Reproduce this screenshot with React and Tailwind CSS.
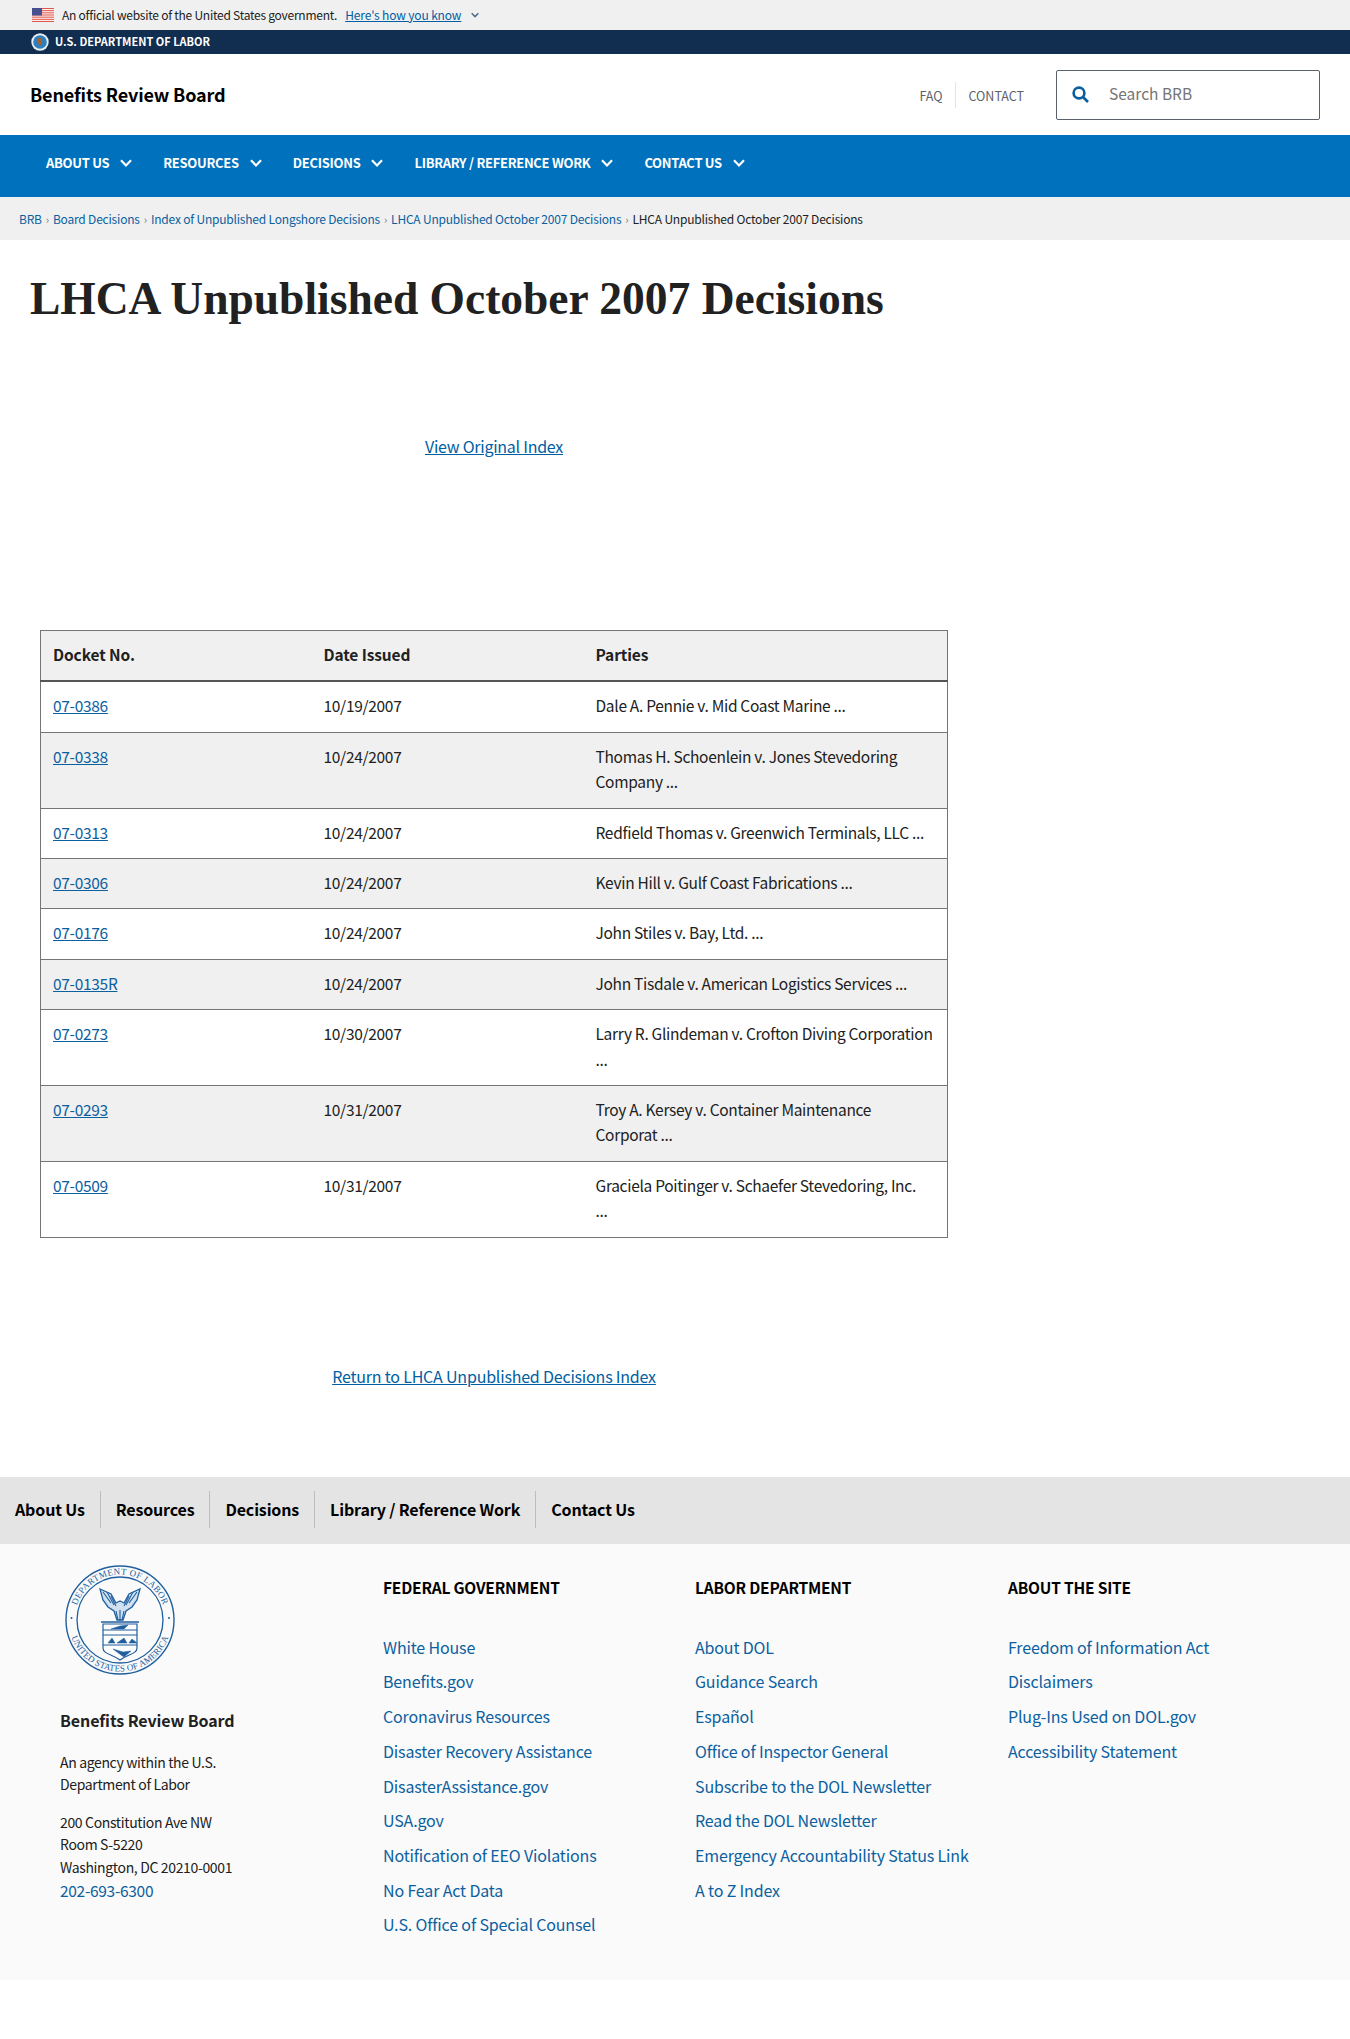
const sans = "font-['Noto_Sans_CJK_SC','Source_Sans_Pro',sans-serif]";
function Chevron({ className }) {
  return (
    <svg viewBox="0 0 12 8" className={className} fill="none" stroke="currentColor" strokeWidth="2.2">
      <path d="M1 1.2 6 6.4l5-5.2" />
    </svg>
  );
}
function Flag() {
  return (
    <svg viewBox="0 0 22 14" className="w-[22px] h-[14px]">
      <rect width="22" height="14" fill="#fff" />
      {[0, 2.15, 4.3, 6.45, 8.6, 10.75, 12.9].map((y) => <rect key={y} y={y} width="22" height="1.1" fill="#e2574c" />)}
      <rect width="10" height="7.5" fill="#46508f" />
    </svg>
  );
}
function SmallSeal() {
  return (
    <svg viewBox="0 0 18 18" className="w-[18px] h-[18px]">
      <circle cx="9" cy="9" r="8.7" fill="#e8eef4" />
      <circle cx="9" cy="9" r="6.8" fill="#2d7fbf" />
      <path d="M7 5h4v5l-2 3-2-3z" fill="#a5622a" />
    </svg>
  );
}
function Seal() {
  const blue = "#205f9e";
  return (
    <svg viewBox="0 0 110 110" className="w-[110px] h-[110px]" fill="none" stroke={blue}>
      <circle cx="55" cy="55" r="54" strokeWidth="1.4" />
      <circle cx="55" cy="55" r="43" strokeWidth="1.3" />
      <path id="sealtop" d="M9.5 55a45.5 45.5 0 0 1 91 0" stroke="none" />
      <path id="sealbot" d="M3.5 55a51.5 51.5 0 0 0 103 0" stroke="none" />
      <text fontFamily="Liberation Serif, serif" fontSize="9" fill={blue} stroke="none" letterSpacing="0.4" textAnchor="middle"><textPath href="#sealtop" startOffset="50%">DEPARTMENT OF LABOR</textPath></text>
      <text fontFamily="Liberation Serif, serif" fontSize="9" fill={blue} stroke="none" letterSpacing="0.1" textAnchor="middle"><textPath href="#sealbot" startOffset="50%">UNITED STATES OF AMERICA</textPath></text>
      <circle cx="6.5" cy="53" r="1" fill={blue} stroke="none" />
      <circle cx="104" cy="53" r="1" fill={blue} stroke="none" />
      <path d="M35 24l11 5 5 9 4-2 4 2 5-9 11-5-3 11-5 7-6 4-3 9h-6l-3-9-6-4-5-7z" fill="#cfe0f0" strokeWidth="1.3" />
      <path d="M38 27l8 11M42 27l7 13M46 31l5 10M72 27l-8 11M68 27l-7 13M64 31l-5 10M51 46l2 9M55 45v11M59 46l-2 9" strokeWidth="1.1" />
      <path d="M36 57h38" strokeWidth="1.6" />
      <path d="M38 59h34v24c0 6-9 6-17 12-8-6-17-6-17-12z" fill="#fdfdfd" strokeWidth="1.2" />
      <path d="M38 65h34M38 70h34M38 80h34" strokeWidth="1" />
      <path d="M46 64l9-3 8-1-4 4h-8zM43 78h7l-3-5zM52 78l7-5 3 5zM64 78l3-4 5 4zM48 84l10 3 8-1-7 6-3-2z" fill={blue} strokeWidth="0.5" />
    </svg>
  );
}
function Search() {
  return (
    <svg viewBox="0 0 17 17" className="w-[17px] h-[17px]" fill="none" stroke="#0b5f9e" strokeWidth="2.6">
      <circle cx="7" cy="7" r="5.4" /><path d="M11 11l5 5" />
    </svg>
  );
}
const nav = ["ABOUT US", "RESOURCES", "DECISIONS", "LIBRARY / REFERENCE WORK", "CONTACT US"];
const crumbs = ["BRB", "Board Decisions", "Index of Unpublished Longshore Decisions", "LHCA Unpublished October 2007 Decisions"];
const rows = [
  ["07-0386", "10/19/2007", "Dale A. Pennie v. Mid Coast Marine ..."],
  ["07-0338", "10/24/2007", "Thomas H. Schoenlein v. Jones Stevedoring Company ..."],
  ["07-0313", "10/24/2007", "Redfield Thomas v. Greenwich Terminals, LLC ..."],
  ["07-0306", "10/24/2007", "Kevin Hill v. Gulf Coast Fabrications ..."],
  ["07-0176", "10/24/2007", "John Stiles v. Bay, Ltd. ..."],
  ["07-0135R", "10/24/2007", "John Tisdale v. American Logistics Services ..."],
  ["07-0273", "10/30/2007", "Larry R. Glindeman v. Crofton Diving Corporation ..."],
  ["07-0293", "10/31/2007", "Troy A. Kersey v. Container Maintenance Corporat ..."],
  ["07-0509", "10/31/2007", "Graciela Poitinger v. Schaefer Stevedoring, Inc.\n..."],
];
const cols = [
  ["FEDERAL GOVERNMENT", ["White House", "Benefits.gov", "Coronavirus Resources", "Disaster Recovery Assistance", "DisasterAssistance.gov", "USA.gov", "Notification of EEO Violations", "No Fear Act Data", "U.S. Office of Special Counsel"], "w-[312px]"],
  ["LABOR DEPARTMENT", ["About DOL", "Guidance Search", "Español", "Office of Inspector General", "Subscribe to the DOL Newsletter", "Read the DOL Newsletter", "Emergency Accountability Status Link", "A to Z Index"], "w-[313px]"],
  ["ABOUT THE SITE", ["Freedom of Information Act", "Disclaimers", "Plug-Ins Used on DOL.gov", "Accessibility Statement"], "w-[300px]"],
];
export default function App() {
  return (
    <div className={`${sans} text-[#212121] bg-white h-[2039px]`}>
      <div className="h-[30px] bg-[#f0f0f0] pl-[32px] flex items-center text-[12px] tracking-[-0.25px] leading-none">
        <Flag />
        <span className="ml-[8px]">An official website of the United States government.</span>
        <a className="ml-[8px] text-[#005ea2] underline tracking-[-0.15px]">Here's how you know</a>
        <Chevron className="ml-[10px] w-[8px] h-[6px] text-[#4a6d8c]" />
      </div>
      <div className="h-[24px] bg-[#112e51] pl-[31px] flex items-center text-white text-[11px] font-bold">
        <SmallSeal />
        <span className="ml-[6px] -mt-[2px]">U.S. DEPARTMENT OF LABOR</span>
      </div>
      <div className="h-[81px] flex items-center justify-between pl-[30px] pr-[30px]">
        <div className="text-[18px] tracking-[-0.15px] font-bold text-black">Benefits Review Board</div>
        <div className="flex items-center">
          <a className="text-[12.5px] text-[#5b616b] pr-[12px] border-r border-[#e4e4e4] leading-[24px] pt-[2px]">FAQ</a>
          <a className="text-[12.5px] text-[#5b616b] pl-[13px] leading-[24px] pt-[2px]">CONTACT</a>
          <div className="ml-[32px] w-[264px] h-[50px] border border-[#5b616b] rounded-[2px] flex items-center pl-[15px]">
            <Search />
            <span className="ml-[20px] text-[#757575] text-[15.5px] -mt-[1px]">Search BRB</span>
          </div>
        </div>
      </div>
      <div className="h-[62px] bg-[#0071bc] pl-[46px] pb-[6px] flex items-center text-white text-[13px] tracking-[-0.3px] font-bold">
        {nav.map((n) => (
          <div key={n} className="flex items-center mr-[31px]">
            <span>{n}</span>
            <Chevron className="ml-[11px] w-[12px] h-[8px]" />
          </div>
        ))}
      </div>
      <div className="h-[43px] bg-[#f0f0f0] pl-[19px] pt-[1px] flex items-center text-[12px] tracking-[-0.2px]">
        {crumbs.map((c) => (
          <span key={c} className="flex items-center">
            <a className="text-[#0b609f]">{c}</a>
            <span className="mx-[4px] text-[#777] text-[11px]">›</span>
          </span>
        ))}
        <span>LHCA Unpublished October 2007 Decisions</span>
      </div>
      <h1 className="pl-[30px] pt-[33px] font-['Liberation_Serif',serif] text-[45.5px] leading-[52px] font-bold text-[#212121]">LHCA Unpublished October 2007 Decisions</h1>
      <div className="w-[908px] ml-[40px] mt-[107px] text-center">
        <a className="text-[16px] tracking-[-0.25px] leading-[28px] text-[#005ea2] underline">View Original Index</a>
      </div>
      <table className="ml-[40px] mt-[170px] w-[908px] border border-[#757575] border-collapse text-[15.5px] tracking-[-0.3px] leading-[25.4px] table-fixed">
        <thead>
          <tr className="bg-[#f0f0f0] border-b-2 border-[#555] text-left">
            <th className="w-[271px] px-[12px] pt-[11px] pb-[13px] font-bold tracking-[-0.1px]">Docket No.</th>
            <th className="w-[272px] px-[12px] pt-[11px] pb-[13px] font-bold tracking-[-0.1px]">Date Issued</th>
            <th className="px-[12px] pt-[11px] pb-[13px] font-bold tracking-[-0.1px]">Parties</th>
          </tr>
        </thead>
        <tbody>
          {rows.map((r, i) => (
            <tr key={r[0]} className={`border-b border-[#757575] align-top ${i % 2 ? "bg-[#f0f0f0]" : "bg-white"}`}>
              <td className="px-[12px] pt-[11px] pb-[13px]"><a className="text-[#0b609f] underline">{r[0]}</a></td>
              <td className="px-[12px] pt-[11px] pb-[13px]">{r[1]}</td>
              <td className="px-[12px] pt-[11px] pb-[13px] whitespace-pre-line">{r[2]}</td>
            </tr>
          ))}
        </tbody>
      </table>
      <div className="w-[908px] ml-[40px] mt-[124px] text-center">
        <a className="text-[16px] tracking-[-0.2px] leading-[28px] text-[#005ea2] underline">Return to LHCA Unpublished Decisions Index</a>
      </div>
      <div className="mt-[87px] h-[67px] bg-[#e4e4e4] flex items-center text-[16px] tracking-[-0.15px] font-bold text-black">
        {["About Us", "Resources", "Decisions", "Library / Reference Work", "Contact Us"].map((n, i) => (
          <span key={n} className={`px-[15px] leading-[37px] -mt-[1px] ${i < 4 ? "border-r border-[#bdbdbd]" : ""}`}>{n}</span>
        ))}
      </div>
      <div className="h-[436px] bg-[#fafafa] flex">
        <div className="w-[383px] pl-[60px] pt-[21px]">
          <div className="pl-[5px]"><Seal /></div>
          <div className="mt-[33px] text-[16px] tracking-[-0.1px] font-bold text-[#212121] leading-[24px]">Benefits Review Board</div>
          <p className="mt-[19px] text-[14px] tracking-[-0.35px] leading-[22.5px]">An agency within the U.S.<br />Department of Labor</p>
          <p className="mt-[15px] text-[14px] tracking-[-0.35px] leading-[22.5px]">200 Constitution Ave NW<br />Room S-5220<br />Washington, DC 20210-0001</p>
          <a className="block text-[15.5px] tracking-[-0.3px] leading-[24px] text-[#0b609f]">202-693-6300</a>
        </div>
        {cols.map(([h, items, w]) => (
          <div key={h} className={`${w} pt-[31px]`}>
            <div className="text-[15.5px] tracking-[-0.2px] font-bold text-black leading-[24px]">{h}</div>
            <ul className="mt-[31px]">
              {items.map((t) => <li key={t} className="text-[16px] tracking-[-0.15px] leading-[34.7px] text-[#0b609f]">{t}</li>)}
            </ul>
          </div>
        ))}
      </div>
    </div>
  );
}
